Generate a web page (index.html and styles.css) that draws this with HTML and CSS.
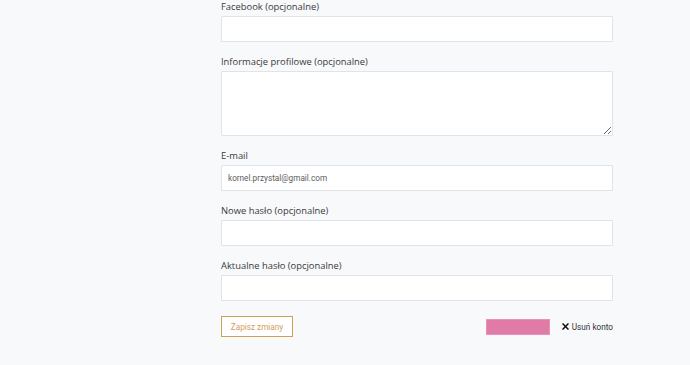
FILE: index.html
```html
<!DOCTYPE html>
<html lang="pl">
<head>
<meta charset="utf-8">
<title>Profil</title>
<link rel="stylesheet" href="styles.css">
</head>
<body>
<main class="page">
  <form class="profile-form">
    <div class="field">
      <label class="field-label">Facebook (opcjonalne)</label>
      <input class="field-input" type="text">
    </div>
    <div class="field">
      <label class="field-label">Informacje profilowe (opcjonalne)</label>
      <textarea class="field-input field-textarea"></textarea>
    </div>
    <div class="field">
      <label class="field-label">E-mail</label>
      <input class="field-input" type="text" value="kornel.przystal@gmail.com">
    </div>
    <div class="field">
      <label class="field-label">Nowe hasło (opcjonalne)</label>
      <input class="field-input" type="password">
    </div>
    <div class="field">
      <label class="field-label">Aktualne hasło (opcjonalne)</label>
      <input class="field-input" type="password">
    </div>
    <div class="actions">
      <button class="btn-save" type="button">Zapisz zmiany</button>
      <div class="actions-right">
        <span class="pink-block"></span>
        <a class="delete-link">
          <svg class="delete-icon" viewBox="0 0 10 10" width="7" height="7"><path d="M1.5 1.5 L8.5 8.5 M8.5 1.5 L1.5 8.5" stroke="#111" stroke-width="2.2" stroke-linecap="square"/></svg>
          <span>Usuń konto</span>
        </a>
      </div>
    </div>
  </form>
</main>
</body>
</html>
```
FILE: styles.css
```css
html, body {
  margin: 0;
  padding: 0;
  background: #f8f9fb;
}
body {
  font-family: "Open Sans", "Noto Sans", sans-serif;
  color: #333;
}
.page {
  padding-left: 221px;
}
.profile-form {
  width: 392px;
  display: flex;
  flex-direction: column;
}
.field {
  display: flex;
  flex-direction: column;
  margin-bottom: 13px;
}
.field-label {
  font-size: 9.4px;
  line-height: 14px;
  height: 14px;
  margin-bottom: 2px;
  color: #3a3a3a;
}
.field-input {
  box-sizing: border-box;
  width: 392px;
  height: 26px;
  margin: 0;
  border: 1px solid #dfe3ea;
  border-radius: 1px;
  background: #fff;
  padding: 0 6px;
  font-family: Roboto, "Open Sans", sans-serif;
  font-size: 8.2px;
  color: #5c5c5c;
  outline: none;
}
.field-textarea {
  height: 65px;
  resize: vertical;
  padding: 6px;
}
.actions {
  margin-top: 2px;
  display: flex;
  align-items: center;
  justify-content: space-between;
}
.btn-save {
  box-sizing: border-box;
  width: 72px;
  height: 21px;
  border: 1px solid #c9a257;
  background: #fff;
  color: #d39c62;
  font-family: Roboto, "Open Sans", sans-serif;
  font-size: 8.2px;
  font-weight: 400;
  padding: 0;
  border-radius: 0;
}
.actions-right {
  display: flex;
  align-items: center;
  gap: 12px;
}
.pink-block {
  box-sizing: border-box;
  display: block;
  width: 64px;
  height: 16px;
  background: #e07ba7;
  border: 1px solid #e890b5;
}
.delete-link {
  display: flex;
  align-items: center;
  gap: 3px;
  font-family: Roboto, "Open Sans", sans-serif;
  font-size: 8.2px;
  color: #333;
}
.delete-icon {
  display: block;
}
```
